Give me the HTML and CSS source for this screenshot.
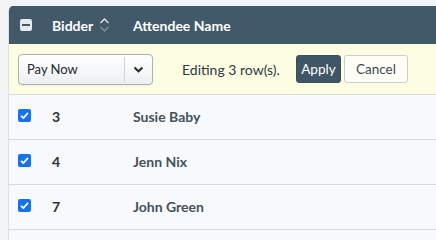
FILE: index.html
```html
<!DOCTYPE html>
<html>
<head>
<meta charset="utf-8">
<link rel="stylesheet" href="styles.css">
</head>
<body>
<div class="table">
  <div class="thead">
    <div class="c1">
      <span class="hcheck"><span class="bar"></span></span>
    </div>
    <div class="c2 th">Bidder
      <svg class="sort" width="11" height="16" viewBox="0 0 11 16">
        <path d="M1.5 6 L5.5 2 L9.5 6" fill="none" stroke="#e3e8ec" stroke-width="1.3"/>
        <path d="M1.5 10 L5.5 14 L9.5 10" fill="none" stroke="#7f909d" stroke-width="1.3"/>
      </svg>
    </div>
    <div class="c3 th">Attendee Name</div>
  </div>
  <div class="bulk">
    <div class="select">
      <span class="sel-text">Pay Now</span>
      <span class="sel-arrow">
        <svg width="11" height="7" viewBox="0 0 11 7"><path d="M1.5 1.5 L5.5 5.3 L9.5 1.5" fill="none" stroke="#1f2b36" stroke-width="2"/></svg>
      </span>
    </div>
    <span class="editing">Editing 3 row(s).</span>
    <button class="btn apply">Apply</button>
    <button class="btn cancel">Cancel</button>
  </div>
  <div class="row">
    <div class="c1"><span class="check"><svg width="13" height="13" viewBox="0 0 13 13"><path d="M3 6.8 L5.4 9 L10 3.8" fill="none" stroke="#fff" stroke-width="1.8"/></svg></span></div>
    <div class="c2 num">3</div>
    <div class="c3 name">Susie Baby</div>
  </div>
  <div class="row">
    <div class="c1"><span class="check"><svg width="13" height="13" viewBox="0 0 13 13"><path d="M3 6.8 L5.4 9 L10 3.8" fill="none" stroke="#fff" stroke-width="1.8"/></svg></span></div>
    <div class="c2 num">4</div>
    <div class="c3 name">Jenn Nix</div>
  </div>
  <div class="row">
    <div class="c1"><span class="check"><svg width="13" height="13" viewBox="0 0 13 13"><path d="M3 6.8 L5.4 9 L10 3.8" fill="none" stroke="#fff" stroke-width="1.8"/></svg></span></div>
    <div class="c2 num">7</div>
    <div class="c3 name">John Green</div>
  </div>
  <div class="row"></div>
</div>
</body>
</html>
```
FILE: styles.css
```css
html, body {
  margin: 0;
  padding: 0;
  background: #f2f3f5;
  font-family: "Lato", "Liberation Sans", sans-serif;
  overflow: hidden;
}
.table {
  margin: 6px 0 0 8px;
  border-left: 1px solid #dde1e5;
  border-top-left-radius: 5px;
  background: #f8f9fa;
  overflow: hidden;
}
.thead {
  display: flex;
  align-items: center;
  height: 38px;
  background: #42596a;
  color: #fff;
}
.c1 {
  width: 34px;
  padding-left: 9px;
  box-sizing: border-box;
  display: flex;
  align-items: center;
}
.c2 {
  width: 80px;
  padding-left: 9px;
  box-sizing: border-box;
  display: flex;
  align-items: center;
}
.c3 {
  padding-left: 10px;
}
.th {
  font-weight: 700;
  font-size: 14px;
  color: #ffffff;
}
.sort {
  margin-left: 6px;
}
.hcheck {
  margin-left: 2px;
  width: 12px;
  height: 12px;
  border-radius: 2px;
  background: #e6eaee;
  display: flex;
  align-items: center;
  justify-content: center;
}
.hcheck .bar {
  width: 8px;
  height: 2px;
  background: #42596a;
}
.bulk {
  display: flex;
  align-items: center;
  height: 50px;
  padding-left: 9px;
  background: #fdfde1;
  border-bottom: 1px solid #d6dbe0;
}
.select {
  width: 135px;
  height: 31px;
  box-sizing: border-box;
  border: 1px solid #a8b0b8;
  border-radius: 4px;
  background: linear-gradient(#ffffff, #eceff2);
  display: flex;
  align-items: center;
  box-shadow: 0 1px 1px rgba(0,0,0,0.06);
}
.sel-text {
  flex: 1;
  padding-left: 8px;
  font-size: 13px;
  color: #1e2730;
}
.sel-arrow {
  width: 27px;
  height: 25px;
  border-left: 1px solid #cdd2d7;
  display: flex;
  align-items: center;
  justify-content: center;
}
.editing {
  margin-left: 29px;
  font-size: 14px;
  color: #2f3b47;
}
.btn {
  font-family: inherit;
  font-size: 13.5px;
  height: 28px;
  border-radius: 3px;
  padding: 0;
  box-sizing: border-box;
}
.apply {
  margin-left: 16px;
  width: 45px;
  background: #3f5667;
  border: 1px solid #3a4f5f;
  color: #fff;
}
.cancel {
  margin-left: 3px;
  width: 64px;
  background: #fefef4;
  border: 1px solid #c9ced3;
  color: #3a4a58;
}
.row {
  display: flex;
  align-items: center;
  height: 45px;
  box-sizing: border-box;
  padding-bottom: 2px;
  border-bottom: 1px solid #d6dbe0;
}
.check {
  width: 13px;
  height: 13px;
  border-radius: 2px;
  background: #1672f0;
  display: flex;
  margin-bottom: 1px;
}
.num {
  font-weight: 700;
  font-size: 14px;
  color: #26313c;
}
.name {
  font-weight: 700;
  font-size: 14px;
  color: #44525f;
}
```
